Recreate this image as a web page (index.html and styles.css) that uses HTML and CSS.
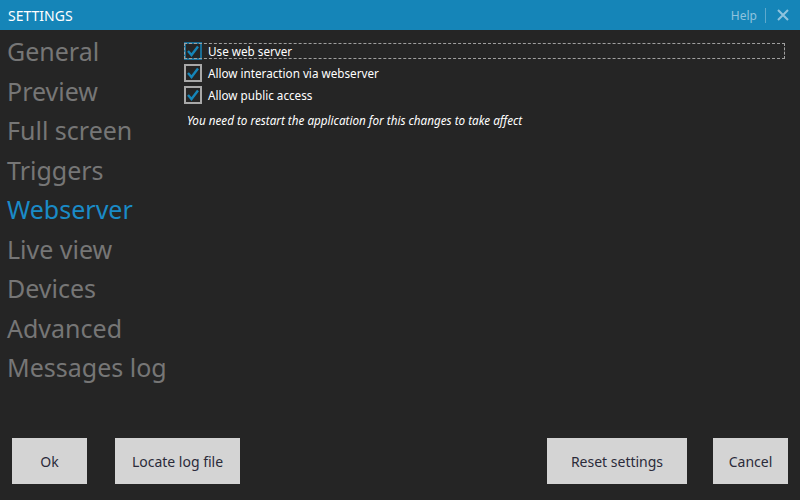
FILE: index.html
```html
<!DOCTYPE html>
<html>
<head>
<meta charset="utf-8">
<link rel="stylesheet" href="styles.css">
</head>
<body>
<div class="window">
  <header class="titlebar">
    <span class="title">SETTINGS</span>
    <div class="title-actions">
      <span class="help">Help</span>
      <span class="sep"></span>
      <svg class="close" width="12" height="12" viewBox="0 0 12 12"><path d="M1 1 L11 11 M11 1 L1 11" stroke="#8fc3de" stroke-width="2"/></svg>
    </div>
  </header>
  <div class="body">
    <nav class="nav">
      <div class="nav-item">General</div>
      <div class="nav-item">Preview</div>
      <div class="nav-item">Full screen</div>
      <div class="nav-item">Triggers</div>
      <div class="nav-item active">Webserver</div>
      <div class="nav-item">Live view</div>
      <div class="nav-item">Devices</div>
      <div class="nav-item">Advanced</div>
      <div class="nav-item">Messages log</div>
    </nav>
    <main class="content">
      <label class="check focused">
        <span class="box"><svg width="14" height="14" viewBox="0 0 14 14"><path d="M2 7 L5.5 11 L12 2.5" fill="none" stroke="#1585b8" stroke-width="2.4"/></svg></span>
        <span class="label">Use web server</span>
      </label>
      <label class="check">
        <span class="box"><svg width="14" height="14" viewBox="0 0 14 14"><path d="M2 7 L5.5 11 L12 2.5" fill="none" stroke="#1585b8" stroke-width="2.4"/></svg></span>
        <span class="label">Allow interaction via webserver</span>
      </label>
      <label class="check">
        <span class="box"><svg width="14" height="14" viewBox="0 0 14 14"><path d="M2 7 L5.5 11 L12 2.5" fill="none" stroke="#1585b8" stroke-width="2.4"/></svg></span>
        <span class="label">Allow public access</span>
      </label>
      <p class="note">You need to restart the application for this changes to take affect</p>
    </main>
  </div>
  <footer class="footer">
    <div class="group">
      <button class="btn btn-ok">Ok</button>
      <button class="btn btn-locate">Locate log file</button>
    </div>
    <div class="group right">
      <button class="btn btn-reset">Reset settings</button>
      <button class="btn btn-cancel">Cancel</button>
    </div>
  </footer>
</div>
</body>
</html>
```
FILE: styles.css
```css
* { box-sizing: border-box; }
html, body { margin: 0; padding: 0; }
body {
  width: 800px;
  height: 500px;
  background: #252525;
  font-family: "Noto Sans", "Open Sans", sans-serif;
  overflow: hidden;
}
.window {
  width: 800px;
  height: 500px;
  display: flex;
  flex-direction: column;
}
.titlebar {
  height: 30px;
  background: #1585b8;
  display: flex;
  align-items: center;
  justify-content: space-between;
  padding: 0 11px 0 8px;
  flex: none;
}
.title {
  color: #fff;
  font-size: 14px;
}
.title-actions {
  display: flex;
  align-items: center;
}
.help {
  color: #8fc3de;
  font-size: 12px;
}
.sep {
  width: 1px;
  height: 15px;
  background: #5ea9cd;
  margin: 0 11px 0 8px;
}
.close { display: block; }
.body {
  flex: 1;
  display: flex;
}
.nav {
  width: 178px;
  padding: 2px 0 0 7px;
  flex: none;
}
.nav-item {
  color: #767676;
  font-size: 25px;
  line-height: 39.5px;
  white-space: nowrap;
}
.nav-item.active { color: #1a8bc7; }
.content {
  flex: 1;
  padding: 12px 15px 0 6px;
}
.check {
  display: flex;
  align-items: center;
  height: 18px;
  margin-bottom: 4px;
}
.box {
  width: 18px;
  height: 18px;
  border: 2px solid #a8a8a8;
  display: flex;
  align-items: center;
  justify-content: center;
  flex: none;
}
.check.focused .box { border-color: #1a6e96; }
.label {
  color: #fff;
  font-size: 11.7px;
  margin-left: 6px;
  white-space: nowrap;
}
.check.focused .label {
  flex: 1;
  border: 1px dashed #a0a0a0;
  margin-left: -18px;
  padding-left: 23px;
  height: 16px;
  line-height: 14px;
}
.note {
  margin: 8px 0 0 3px;
  color: #fff;
  font-size: 11.7px;
  font-style: italic;
}
.footer {
  height: 62px;
  flex: none;
  display: flex;
  justify-content: space-between;
  padding: 0 12px 16px 12px;
}
.group { display: flex; gap: 28px; }
.group.right { gap: 26px; }
.btn {
  height: 46px;
  background: #d4d4d4;
  border: none;
  color: #2b2b3a;
  font-family: "Noto Sans", "Open Sans", sans-serif;
  font-size: 14px;
  padding: 0;
}
.btn-ok { width: 75px; }
.btn-locate { width: 125px; }
.btn-reset { width: 140px; }
.btn-cancel { width: 75px; }
```
